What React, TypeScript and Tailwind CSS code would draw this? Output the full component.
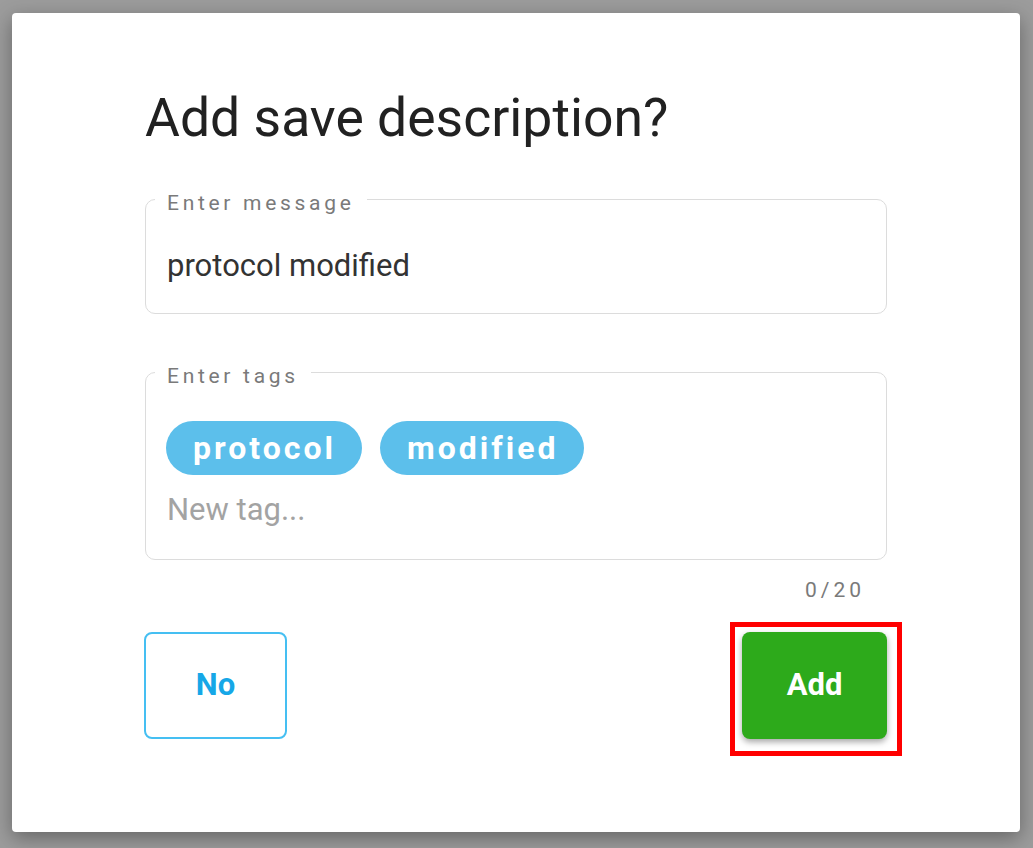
import React from "react";

const font = { fontFamily: "Roboto, 'Noto Sans', Arial, sans-serif" };

function Field({
  label,
  children,
  pb,
}: {
  label: string;
  children: React.ReactNode;
  pb: string;
}) {
  return (
    <fieldset className={`border border-[#dcdcdc] rounded-[10px] m-0 p-0 min-w-0 ${pb}`}>
      <legend className="ml-[9px] px-[12px] pt-[8px] text-[21px] leading-[21px] tracking-[3.7px] text-[#7a7a7a]">
        {label}
      </legend>
      <div className="pl-[21px] pr-[21px] pt-[34px]">{children}</div>
    </fieldset>
  );
}

export default function App() {
  return (
    <div className="w-[1033px] h-[848px] bg-[#9c9c9c] pt-[13px] pl-[12px] overflow-hidden" style={font}>
      <div className="w-[1008px] h-[819px] bg-white rounded-[4px] shadow-[0_6px_20px_rgba(0,0,0,0.35)] px-[133px] pt-[73px] flex flex-col">
        <h1 className="text-[53.5px] leading-[64px] font-normal text-[#212121] m-0">
          Add save description?
        </h1>

        <div className="mt-[35px]">
          <Field label="Enter message" pb="pb-[29px]">
            <div className="text-[31px] leading-[36px] text-[#333333]">protocol modified</div>
          </Field>
        </div>

        <div className="mt-[44px]">
          <Field label="Enter tags" pb="pb-[31px]">
            <div className="flex gap-[18px] -ml-[1px]">
              <span className="h-[54px] pl-[27px] pr-[26px] rounded-full bg-[#5cbfeb] text-white font-bold text-[32px] leading-[54px] tracking-[3px]">
                protocol
              </span>
              <span className="h-[54px] pl-[27px] pr-[26px] rounded-full bg-[#5cbfeb] text-white font-bold text-[32px] leading-[54px] tracking-[3px]">
                modified
              </span>
            </div>
            <div className="mt-[17px] text-[31px] leading-[36px] text-[#a3a3a3]">New tag...</div>
          </Field>
        </div>

        <div className="mt-[18px] pr-[22px] flex justify-end text-[21px] leading-[24px] tracking-[4px] text-[#7a7a7a]">
          0/20
        </div>

        <div className="mt-[30px] flex justify-between items-start">
          <button className="w-[143px] h-[107px] -ml-[1px] border-2 border-[#45bff2] rounded-[8px] bg-white text-[#16a7e7] font-bold text-[31px]">
            No
          </button>
          <div className="relative">
            <button className="w-[145px] h-[107px] rounded-[8px] bg-[#2daa1b] text-white font-bold text-[31px] shadow-[0_3px_6px_rgba(0,0,0,0.35)]">
              Add
            </button>
            <div className="absolute -left-[12px] -top-[10px] -right-[15px] -bottom-[17px] border-[5px] border-[#ff0000] pointer-events-none" />
          </div>
        </div>
      </div>
    </div>
  );
}
